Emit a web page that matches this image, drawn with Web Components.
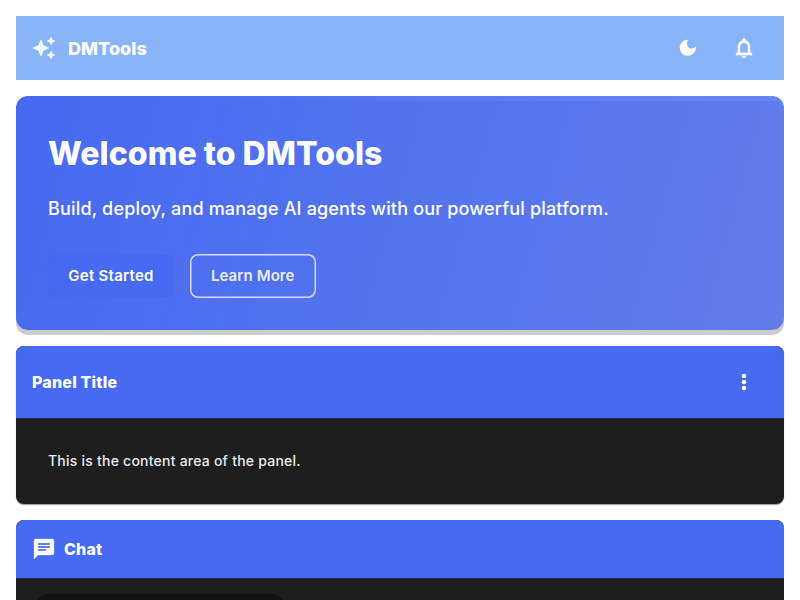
<!DOCTYPE html>
<html lang="en">
<head>
<meta charset="utf-8">
<title>DMTools</title>
<style>
html{height:100%;overflow:hidden}
body{margin:0;height:100%;overflow:hidden;background:#fff;font-family:Inter,"Liberation Sans",sans-serif;--primary:#466af1;--surface:#1e1e1e}
</style>
</head>
<body>
<dm-page>
  <dm-header>DMTools</dm-header>
  <dm-hero>
    <span slot="title">Welcome to DMTools</span>
    <span slot="text">Build, deploy, and manage AI agents with our powerful platform.</span>
    <dm-button>Get Started</dm-button>
    <dm-button outline>Learn More</dm-button>
  </dm-hero>
  <dm-panel>
    <span slot="title">Panel Title</span>
    <dm-icon slot="action" name="more"></dm-icon>
    This is the content area of the panel.
  </dm-panel>
  <dm-chat>Chat</dm-chat>
</dm-page>
<script>
const ICONS = {
  sparkle: '<path stroke="currentColor" stroke-width=".5" d="M19 9l1.250-2.750L23 5l-2.750-1.250L19 1l-1.250 2.750L15 5l2.750 1.250L19 9zm-7.500.5L9 4 6.500 9.500 1 12l5.500 2.500L9 20l2.500-5.500L17 12l-5.500-2.500zM19 15l-1.250 2.750L15 19l2.750 1.250L19 23l1.250-2.750L23 19l-2.750-1.250L19 15z"/>',
  moon: '<path d="M12 3a9 9 0 1 0 9 9c0-.46-.04-.92-.1-1.360a5.389 5.389 0 0 1-4.400 2.260 5.403 5.403 0 0 1-3.140-9.800c-.44-.06-.9-.1-1.360-.1z"/>',
  bell: '<path stroke="currentColor" stroke-width=".6" d="M12 22c1.100 0 2-.9 2-2h-4c0 1.100.9 2 2 2zm6-6v-5c0-3.070-1.630-5.640-4.500-6.320V4c0-.83-.67-1.500-1.500-1.500s-1.500.67-1.500 1.500v.68C7.640 5.360 6 7.920 6 11v5l-2 2v1h16v-1l-2-2zm-2 1H8v-6c0-2.480 1.510-4.500 4-4.500s4 2.020 4 4.500v6z"/>',
  more: '<circle cx="12" cy="6" r="2.300"/><circle cx="12" cy="12" r="2.300"/><circle cx="12" cy="18" r="2.300"/>',
  chat: '<path stroke="currentColor" stroke-width=".3" d="M20 2H4c-1.100 0-1.990.9-1.990 2L2 22l4-4h14c1.100 0 2-.9 2-2V4c0-1.100-.9-2-2-2zM6 9h12v2H6V9zm8 5H6v-2h8v2zm4-6H6V6h12v2z"/>'
};
function define(name, html) {
  customElements.define(name, class extends HTMLElement {
    constructor() {
      super();
      const t = document.createElement('template');
      t.innerHTML = html;
      this.attachShadow({mode: 'open'}).append(t.content.cloneNode(true));
    }
  });
}
customElements.define('dm-icon', class extends HTMLElement {
  connectedCallback() {
    if (this.shadowRoot) return;
    this.attachShadow({mode: 'open'}).innerHTML =
      `<style>:host{display:block;width:var(--size,24px);height:var(--size,24px);color:#fff}svg{display:block;width:100%;height:100%;fill:currentColor}</style><svg viewBox="0 0 24 24">${ICONS[this.getAttribute('name')]}</svg>`;
  }
});
define('dm-page', `<style>:host{display:flex;flex-direction:column;gap:16px;padding:16px 16px 0}</style><slot></slot>`);
define('dm-header', `<style>
:host{display:flex;align-items:center;height:64px;box-sizing:border-box;padding:0 28px 0 16px;background:#8ab4f8;color:#fff}
.t{margin-left:12px;padding-top:1px;font-size:18px;font-weight:800;line-height:24px;letter-spacing:.05px;flex:1}
.a{display:flex;gap:33.250px;align-items:center}
.moon{--size:21.500px}.bell{--size:24px}
</style><dm-icon name="sparkle"></dm-icon><div class="t"><slot></slot></div>
<div class="a"><dm-icon class="moon" name="moon"></dm-icon><dm-icon class="bell" name="bell"></dm-icon></div>`);
define('dm-hero', `<style>
:host{display:block;position:relative;height:234px;box-sizing:border-box;padding:32px;border-radius:12px;color:#fff;
background:linear-gradient(105deg,#466af1,#627dea);box-shadow:0 5px 0 rgba(0,0,0,.2)}
:host::after{content:"";position:absolute;inset:0;border-radius:12px;box-shadow:inset 0 5px 0 rgba(110,143,255,.5);-webkit-mask-image:linear-gradient(90deg,transparent 20%,#000);mask-image:linear-gradient(90deg,transparent 20%,#000);pointer-events:none}
h1{margin:0;padding-top:1px;font-size:32px;font-weight:800;line-height:49px;letter-spacing:.05px}
p{margin:18px 0 0;font-size:18px;font-weight:450;line-height:26px;letter-spacing:.17px}
.b{display:flex;gap:15.500px;align-items:center;margin-top:32px}
</style><h1><slot name="title"></slot></h1><p><slot name="text"></slot></p><div class="b"><slot></slot></div>`);
define('dm-button', `<style>
:host{display:flex;align-items:center;justify-content:center;box-sizing:border-box;width:126px;height:42px;border-radius:8px;background:var(--primary);color:#fff;font-size:15px;font-weight:600;line-height:20px;letter-spacing:.26px;box-shadow:0 0 1px rgba(0,0,0,.15)}
:host([outline]){height:44px;width:126.500px;background:none;color:rgba(255,255,255,.9);letter-spacing:.1px;box-shadow:inset 0 0 0 1.500px rgba(255,255,255,.75)}
</style><slot></slot>`);
define('dm-panel', `<style>
:host{display:block;border-radius:8px;overflow:hidden;background:var(--surface);box-shadow:0 1px 1px rgba(0,0,0,.4)}
header{display:flex;align-items:center;justify-content:space-between;height:73px;box-sizing:border-box;padding:0 28px 0 16px;background:var(--primary);border-bottom:1px solid #273052;color:#fff;font-size:16px;font-weight:800;letter-spacing:.2px}
.c{box-sizing:border-box;height:85px;padding:31px 32px;font-size:14px;font-weight:450;line-height:22px;letter-spacing:.23px;color:#e8eaed}
</style><header><slot name="title"></slot><slot name="action"></slot></header><div class="c"><slot></slot></div>`);
define('dm-chat', `<style>
:host{display:block;height:80px;border-radius:8px 8px 0 0;overflow:hidden;background:var(--surface)}
header{display:flex;align-items:center;gap:8px;height:59px;box-sizing:border-box;padding:0 16px;background:var(--primary);border-bottom:1px solid #273052;color:#fff;font-size:16px;font-weight:800;letter-spacing:.2px}
.m{width:256px;height:40px;margin:15px 16px 0;border-radius:18px 18px 0 0;background:#121212}
</style><header><dm-icon name="chat"></dm-icon><slot></slot></header><div class="m"></div>`);
</script>
</body>
</html>
